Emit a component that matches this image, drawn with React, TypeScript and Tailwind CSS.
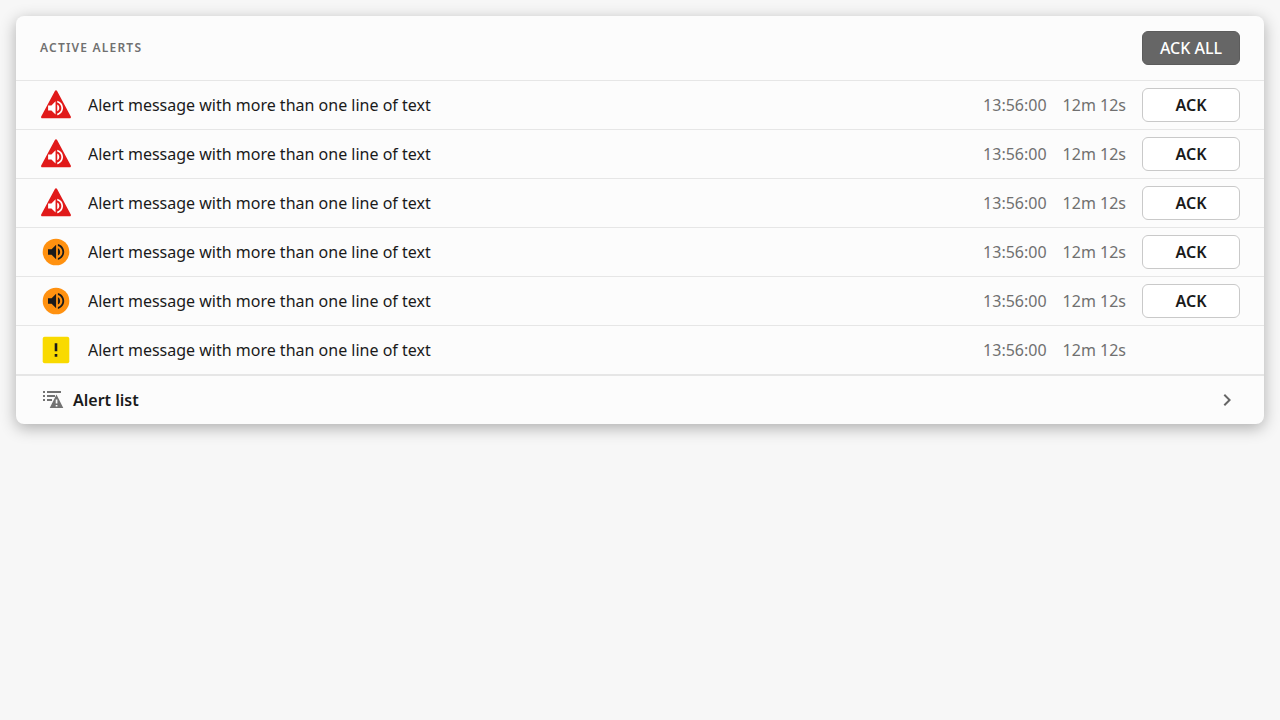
import React from "react";

type Severity = "alarm" | "warning" | "caution";

interface AlertItem {
  id: number;
  severity: Severity;
  message: string;
  time: string;
  duration: string;
}

const severities: Severity[] = ["alarm", "alarm", "alarm", "warning", "warning", "caution"];

const alerts: AlertItem[] = severities.map((severity, id) => ({
  id,
  severity,
  message: "Alert message with more than one line of text",
  time: "13:56:00",
  duration: "12m 12s",
}));

const speakerPath =
  "M3 9v6h4l5 5V4L7 9H3zm13.5 3c0-1.77-1.02-3.29-2.5-4.03v8.05c1.48-.73 2.5-2.25 2.5-4.02zM14 3.23v2.06c2.89.86 5 3.54 5 6.71s-2.11 5.85-5 6.71v2.06c4.01-.91 7-4.49 7-8.77s-2.99-7.86-7-8.77z";

function AlertIcon({ severity }: { severity: Severity }) {
  return (
    <svg viewBox="0 0 32 32" className="size-8 shrink-0" role="img" aria-label={severity}>
      {severity === "alarm" && (
        <>
          <path
            d="M14.9 1.9a1.3 1.3 0 0 1 2.2 0l13.7 25.6a1.2 1.2 0 0 1-1.1 1.8H2.3a1.2 1.2 0 0 1-1.1-1.8z"
            fill="#e11a1a"
          />
          <path d={speakerPath} fill="#fff" transform="translate(5.6 9) scale(.83)" />
        </>
      )}
      {severity === "warning" && (
        <>
          <circle cx="16" cy="16" r="13.3" fill="#ff9110" />
          <path d={speakerPath} fill="#1a1a1a" transform="translate(5.3 5.2) scale(.9)" />
        </>
      )}
      {severity === "caution" && (
        <>
          <rect x="2.7" y="2.7" width="26.6" height="26.6" rx="2" fill="#f9da00" />
          <path d="M14.7 9.3h2.6v8h-2.6zM14.7 20h2.6v2.7h-2.6z" fill="#1a1a1a" />
        </>
      )}
    </svg>
  );
}

function AlertListIcon() {
  return (
    <svg viewBox="0 0 24 24" className="size-6 shrink-0" fill="#737373" aria-hidden="true">
      <path d="M2 3h2v2H2zM6 3h14v2H6zM2 7h2v2H2zM6 7h8v2H6zM2 11h2v2H2zM6 11h5v2H6z" />
      <path
        fillRule="evenodd"
        d="M15.5 6.5L22.3 20H8.7zM14.7 11.5v4h1.7v-4zM14.7 16.9v1.7h1.7v-1.7z"
      />
    </svg>
  );
}

function ChevronIcon() {
  return (
    <svg viewBox="0 0 24 24" className="size-6 shrink-0" fill="#666666" aria-hidden="true">
      <path d="M8.59 16.59L13.17 12 8.59 7.41 10 6l6 6-6 6-1.41-1.41z" />
    </svg>
  );
}

function AlertRow({ alert }: { alert: AlertItem }) {
  return (
    <li className="flex h-[49px] items-center gap-4 border-t border-[#e6e6e6] px-6">
      <AlertIcon severity={alert.severity} />
      <p className="min-w-0 flex-1 truncate">{alert.message}</p>
      <time className="text-[#707070]">{alert.time}</time>
      <span className="text-[#707070]">{alert.duration}</span>
      <div className="w-[98px]">
        {alert.severity !== "caution" && (
          <button
            type="button"
            className="h-[34px] w-full rounded-md border border-[#c9c9c9] bg-white font-semibold"
          >
            ACK
          </button>
        )}
      </div>
    </li>
  );
}

export default function App() {
  return (
    <main className="min-h-screen bg-[#f7f7f7] p-4 font-['Noto_Sans',sans-serif] text-base text-[#1a1a1a]">
      <section className="overflow-hidden rounded-lg bg-[#fcfcfc] shadow-[0_4px_16px_rgba(0,0,0,0.3)]">
        <header className="flex h-16 items-center justify-between px-6">
          <h2 className="text-xs font-semibold tracking-widest text-[#707070]">ACTIVE ALERTS</h2>
          <button
            type="button"
            className="h-[34px] w-[98px] rounded-md border border-[#5c5c5c] bg-[#666666] font-medium text-white"
          >
            ACK ALL
          </button>
        </header>
        <ul>
          {alerts.map((alert) => (
            <AlertRow key={alert.id} alert={alert} />
          ))}
        </ul>
        <button
          type="button"
          className="flex h-[50px] w-full items-center gap-2 border-t-2 border-[#e6e6e6] px-[25px] text-left"
        >
          <AlertListIcon />
          <span className="flex-1 font-semibold">Alert list</span>
          <ChevronIcon />
        </button>
      </section>
    </main>
  );
}
